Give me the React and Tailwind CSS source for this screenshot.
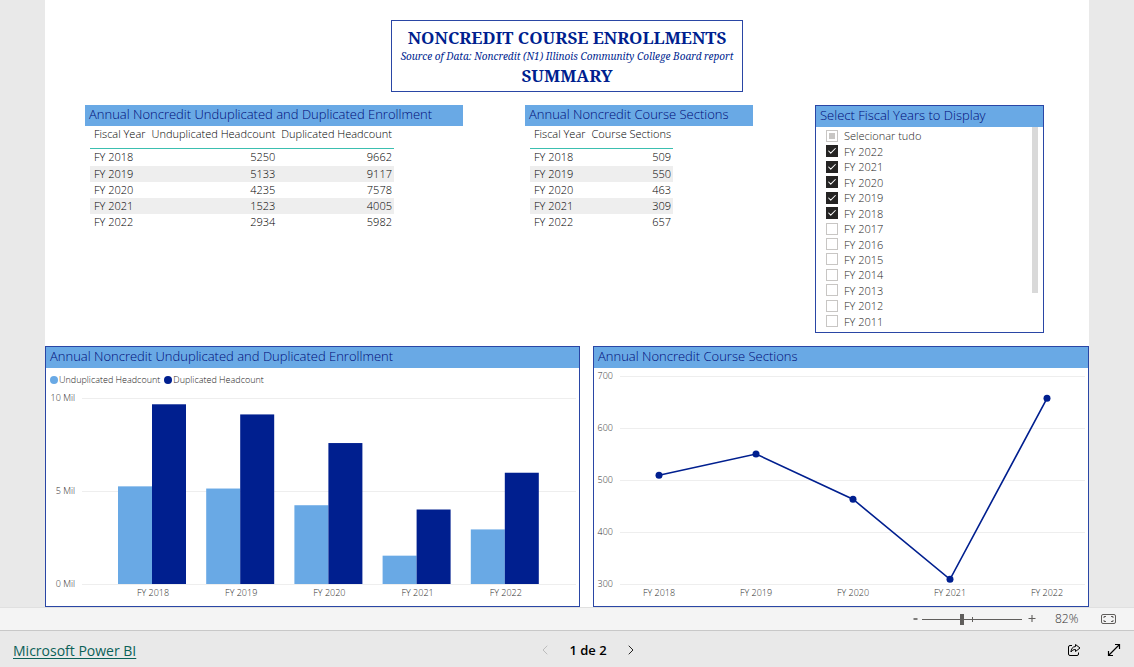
import { Check, ChevronLeft, ChevronRight } from 'lucide-react';

const ENROLLMENT = [
  { year: 'FY 2018', unduplicated: 5250, duplicated: 9662, sections: 509 },
  { year: 'FY 2019', unduplicated: 5133, duplicated: 9117, sections: 550 },
  { year: 'FY 2020', unduplicated: 4235, duplicated: 7578, sections: 463 },
  { year: 'FY 2021', unduplicated: 1523, duplicated: 4005, sections: 309 },
  { year: 'FY 2022', unduplicated: 2934, duplicated: 5982, sections: 657 },
];

const YEARS = [2022, 2021, 2020, 2019, 2018, 2017, 2016, 2015, 2014, 2013, 2012, 2011];

function PanelTitle({ children }) {
  return (
    <h2 className="h-[21px] shrink-0 bg-[#69a9e5] px-1 text-[13px] leading-[18px] font-light whitespace-nowrap text-[#000c78]">
      {children}
    </h2>
  );
}

function DataTable({ columns, rows }) {
  return (
    <table className="ml-[5px] border-separate border-spacing-0 text-[11px] leading-4 font-light text-black">
      <thead>
        <tr className="h-[23px] align-top">
          {columns.map((column) => (
            <th
              key={column.key}
              scope="col"
              className="border-b border-solid border-b-[#3bbfb0] pr-[2px] pl-1 text-left font-light whitespace-nowrap"
            >
              {column.label}
            </th>
          ))}
        </tr>
      </thead>
      <tbody>
        {rows.map((row) => (
          <tr key={row.year} className="h-4 align-top first:h-[17px] even:bg-[#eeeeee]">
            {columns.map((column) => (
              <td
                key={column.key}
                className="pr-[2px] pl-1 text-right whitespace-nowrap first:text-left"
              >
                {row[column.key]}
              </td>
            ))}
          </tr>
        ))}
      </tbody>
    </table>
  );
}

function YearOption({ label, checked, partial }) {
  return (
    <label className="flex flex-1 items-center gap-[6px]">
      <span className="relative flex size-3">
        <input
          type="checkbox"
          defaultChecked={checked}
          className="peer size-3 appearance-none border border-[#c8c6c4] bg-white checked:border-[#252423] checked:bg-[#252423]"
        />
        <Check
          strokeWidth={2.5}
          className="pointer-events-none absolute inset-px hidden size-[10px] text-white peer-checked:block"
        />
        {partial && <span className="pointer-events-none absolute inset-[3px] bg-[#c8c6c4]" />}
      </span>
      {label}
    </label>
  );
}

function YearSlicer() {
  return (
    <section className="flex h-[228px] flex-col border border-[#2a46a5]">
      <PanelTitle>Select Fiscal Years to Display</PanelTitle>
      <div className="flex min-h-0 flex-1 justify-between pr-[5px] pl-[10px]">
        <div className="flex flex-1 flex-col pt-px pb-[3px] text-[11px] leading-[15px] font-light text-[#252423]">
          <YearOption label="Selecionar tudo" partial />
          {YEARS.map((year) => (
            <YearOption key={year} label={`FY ${year}`} checked={year >= 2018} />
          ))}
        </div>
        <div className="h-[166px] w-[6px] bg-[#d9d9d9]" />
      </div>
    </section>
  );
}

function BarChart() {
  const base = 195;
  const height = (value) => (value * 186) / 10000;

  return (
    <svg viewBox="0 0 533 217" className="block w-full text-[9px] font-light" role="img" aria-label="Headcount by fiscal year">
      {[0, 5, 10].map((tick) => {
        const y = base - height(tick * 1000);
        return (
          <g key={tick}>
            <line x1="36" x2="530" y1={y + 0.5} y2={y + 0.5} stroke="#eeeeee" />
            <text x="29" y={y + 3} textAnchor="end" fill="#323130">
              {tick} Mil
            </text>
          </g>
        );
      })}
      {ENROLLMENT.map((row, i) => {
        const x = 72 + i * 88.2;
        return (
          <g key={row.year}>
            <rect x={x} y={base - height(row.unduplicated)} width="34" height={height(row.unduplicated)} fill="#69a9e5" />
            <rect x={x + 34} y={base - height(row.duplicated)} width="34" height={height(row.duplicated)} fill="#001f8f" />
            <text x={x + 35} y="207" textAnchor="middle" fill="#323130">
              {row.year}
            </text>
          </g>
        );
      })}
    </svg>
  );
}

function LineChart() {
  const toX = (i) => 65 + i * 97;
  const toY = (value) => 216 - (value - 300) * 0.52;
  const points = ENROLLMENT.map((row, i) => `${toX(i)},${toY(row.sections)}`).join(' ');

  return (
    <svg viewBox="0 0 494 238" className="block w-full text-[9px] font-light" role="img" aria-label="Course sections by fiscal year">
      {[300, 400, 500, 600, 700].map((tick) => (
        <g key={tick}>
          <line x1="26" x2="491" y1={toY(tick) + 0.5} y2={toY(tick) + 0.5} stroke="#eeeeee" />
          <text x="19" y={toY(tick) + 3} textAnchor="end" fill="#323130">
            {tick}
          </text>
        </g>
      ))}
      <polyline points={points} fill="none" stroke="#001f8f" strokeWidth="1.6" />
      {ENROLLMENT.map((row, i) => (
        <g key={row.year}>
          <circle cx={toX(i)} cy={toY(row.sections)} r="3.5" fill="#001f8f" />
          <text x={toX(i)} y="228" textAnchor="middle" fill="#323130">
            {row.year}
          </text>
        </g>
      ))}
    </svg>
  );
}

function Legend() {
  return (
    <div className="flex h-[21px] items-center gap-1 pt-[3px] pl-1 text-[9px] font-light text-[#252423]">
      <span className="flex items-center gap-px">
        <span className="size-2 rounded-full bg-[#69a9e5]" />
        Unduplicated Headcount
      </span>
      <span className="flex items-center gap-px">
        <span className="size-2 rounded-full bg-[#001f8f]" />
        Duplicated Headcount
      </span>
    </div>
  );
}

function ZoomBar() {
  return (
    <div className="flex h-[23px] shrink-0 items-center justify-end border-t border-[#e0e0e0] bg-[#f4f4f4] pr-[18px] text-[#605e5c]">
      <button type="button" aria-label="Zoom out" className="flex h-4 w-[10px] items-center justify-center">
        <svg viewBox="0 0 10 16" className="h-4 w-[10px]">
          <path d="M1.5 8h4" stroke="currentColor" strokeWidth="1.6" />
        </svg>
      </button>
      <span className="relative flex h-4 items-center">
        <input
          type="range"
          aria-label="Zoom"
          min="0"
          max="100"
          defaultValue="40"
          className="h-4 w-[100px] appearance-none bg-transparent [&::-webkit-slider-runnable-track]:h-px [&::-webkit-slider-runnable-track]:bg-[#605e5c] [&::-webkit-slider-thumb]:-mt-[5px] [&::-webkit-slider-thumb]:h-[11px] [&::-webkit-slider-thumb]:w-1 [&::-webkit-slider-thumb]:appearance-none [&::-webkit-slider-thumb]:bg-[#605e5c]"
        />
        <span className="pointer-events-none absolute top-[6px] left-1/2 h-[5px] w-px bg-[#605e5c]" />
      </span>
      <button type="button" aria-label="Zoom in" className="ml-[5px] flex size-[10px] items-center justify-center">
        <svg viewBox="0 0 10 10" className="size-[10px]">
          <path d="M1.5 4.5h7M5 1v7" stroke="currentColor" strokeWidth="1.1" />
        </svg>
      </button>
      <span className="ml-[18px] w-[26px] text-[12px] leading-4 font-light text-[#323130]">82%</span>
      <button type="button" aria-label="Fit to page" className="ml-5">
        <svg viewBox="0 0 15 12" className="h-3 w-[15px]" fill="none" stroke="currentColor">
          <rect x="0.5" y="1.5" width="14" height="9" rx="1.5" />
          <path d="M5 3.5H3v1.5M3 7v1.5h2M10 3.5h2v1.5M12 7v1.5h-2" />
        </svg>
      </button>
    </div>
  );
}

function Footer() {
  return (
    <footer className="grid h-[37px] shrink-0 grid-cols-[1fr_auto_1fr] items-center border-t border-[#c8c8c8] bg-[#e9e9e9] px-[13px] pt-px">
      <div>
        <a href="#powerbi" className="text-[14px] leading-5 text-[#0b6158] underline underline-offset-2">
          Microsoft Power BI
        </a>
      </div>
      <nav className="ml-[42px] flex items-center gap-4 text-[#252423]">
        <button type="button" aria-label="Previous page" disabled className="text-[#bdbdbd]">
          <ChevronLeft size={16} strokeWidth={1.5} />
        </button>
        <span className="text-[13px] leading-5 font-semibold text-black">1 de 2</span>
        <button type="button" aria-label="Next page">
          <ChevronRight size={16} strokeWidth={1.5} />
        </button>
      </nav>
      <div className="flex items-center justify-end gap-[26px] text-black">
        <button type="button" aria-label="Share">
          <svg viewBox="0 0 14 14" className="size-[14px]" fill="none" stroke="currentColor" strokeLinejoin="round">
            <path d="M5 2.5H3A1.5 1.5 0 0 0 1.5 4v7A1.5 1.5 0 0 0 3 12.5h7a1.5 1.5 0 0 0 1.5-1.5V9.5" />
            <path d="M8.5 1.5 13 5 8.5 8.5v-2C6.5 6.5 5 7.2 4 9c0-3 1.5-5.300 4.5-5.500z" />
          </svg>
        </button>
        <button type="button" aria-label="Full screen">
          <svg viewBox="0 0 14 14" className="size-[14px]" fill="none" stroke="currentColor" strokeWidth="1.2">
            <path d="M1.5 12.5 12.5 1.5M8 1.5h4.5V6M1.5 8v4.5H6" />
          </svg>
        </button>
      </div>
    </footer>
  );
}

export default function App() {
  return (
    <div className="flex min-h-screen flex-col bg-[#e9e9e9] font-['Open_Sans','Noto_Sans',sans-serif]">
      <main className="mx-[45px] flex-1 bg-white pt-5">
        <header className="mx-auto flex h-[72px] w-[352px] flex-col items-center justify-center border border-[#2a46a5] font-['Noto_Serif',serif] whitespace-nowrap text-[#001f8f]">
          <h1 className="text-[17px] leading-[21px] font-bold">NONCREDIT COURSE ENROLLMENTS</h1>
          <p className="text-[10px] leading-[17px] italic">
            Source of Data: Noncredit (N1) Illinois Community College Board report
          </p>
          <p className="text-[17px] leading-[21px] font-bold">SUMMARY</p>
        </header>

        <div className="mt-[13px] grid grid-cols-[378fr_228fr_229fr] gap-[62px] pr-[45px] pl-10">
          <section>
            <PanelTitle>Annual Noncredit Unduplicated and Duplicated Enrollment</PanelTitle>
            <DataTable
              columns={[
                { key: 'year', label: 'Fiscal Year' },
                { key: 'unduplicated', label: 'Unduplicated Headcount' },
                { key: 'duplicated', label: 'Duplicated Headcount' },
              ]}
              rows={ENROLLMENT}
            />
          </section>
          <section>
            <PanelTitle>Annual Noncredit Course Sections</PanelTitle>
            <DataTable
              columns={[
                { key: 'year', label: 'Fiscal Year' },
                { key: 'sections', label: 'Course Sections' },
              ]}
              rows={ENROLLMENT}
            />
          </section>
          <YearSlicer />
        </div>

        <div className="mt-[13px] grid grid-cols-[535fr_496fr] gap-[13px]">
          <section className="border border-[#2a46a5]">
            <PanelTitle>Annual Noncredit Unduplicated and Duplicated Enrollment</PanelTitle>
            <Legend />
            <BarChart />
          </section>
          <section className="border border-[#2a46a5]">
            <PanelTitle>Annual Noncredit Course Sections</PanelTitle>
            <LineChart />
          </section>
        </div>
      </main>
      <ZoomBar />
      <Footer />
    </div>
  );
}
